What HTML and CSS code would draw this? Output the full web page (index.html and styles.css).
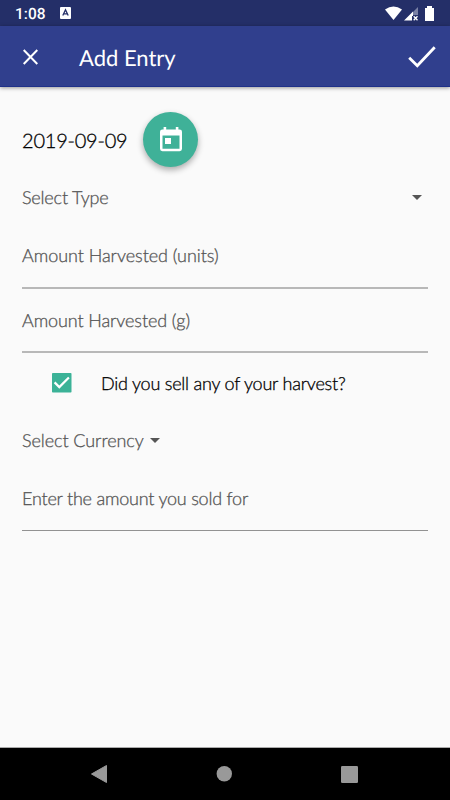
FILE: index.html
```html
<!DOCTYPE html>
<html lang="en">
<head>
<meta charset="utf-8">
<title>Add Entry</title>
<link rel="stylesheet" href="styles.css">
</head>
<body>
<div class="screen">
  <div class="status">
    <span class="clock">1:08</span>
    <svg class="app-badge" width="11" height="12" viewBox="0 0 11 12"><rect width="11" height="12" rx="1" fill="#fff"/><path d="M2.8 8.5 5.5 2.8 8.2 8.5M3.8 6.8h3.4" fill="none" stroke="#242f68" stroke-width="1.3"/></svg>
    <svg class="signals" width="50" height="16" viewBox="0 0 50 16"><path d="M0 3.6Q8.500-2.800 17 3.600L8.500 14Z" fill="#fff"/><path d="M33 1v8h-6V7Z" fill="#7a81a5"/><path d="M19 14.500 28 5.500V10h-1v4.500Z" fill="#fff"/><path d="m28.700 10.200 3.800 4m0-4-3.800 4" stroke="#fff" stroke-width="1.300"/><path d="M40 2h2V0h5v2h2v13h-9Z" fill="#fff"/></svg>
  </div>
  <header class="appbar">
    <svg class="close" width="15" height="16" viewBox="0 0 15 16"><path d="m.7 1 13.600 14M14.300 1 .7 15" stroke="#fff" stroke-width="2"/></svg>
    <h1>Add Entry</h1>
    <svg class="done" width="28" height="22" viewBox="0 0 28 22"><path d="m1.200 11.700 8.100 8L26.700 1.200" fill="none" stroke="#fff" stroke-width="2.800"/></svg>
  </header>
  <main class="form">
    <div class="date-row">
      <span class="date">2019-09-09</span>
      <button class="fab" aria-label="Choose date"><svg width="22" height="25" viewBox="0 0 22 25"><path fill="#fff" fill-rule="evenodd" d="M3.600 0h2.600v2.400h9.600V0h2.600v2.400h1.200A2.400 2.400 0 0 1 22 4.800v17A2.400 2.400 0 0 1 19.600 24.200H2.400A2.400 2.400 0 0 1 0 21.800v-17A2.400 2.400 0 0 1 2.400 2.400h1.200ZM2.500 8.500v13.200h17V8.500ZM5 11h6v6H5Z"/></svg></button>
    </div>
    <div class="select wide"><span>Select Type</span><i class="caret"></i></div>
    <div class="field units">Amount Harvested (units)</div>
    <div class="field grams">Amount Harvested (g)</div>
    <div class="check-row">
      <svg width="20" height="20" viewBox="0 0 20 20"><rect width="19.500" height="19.500" rx=".8" fill="#3bb297"/><path d="m2.600 9.400 4.700 4.700 9.600-9.700" fill="none" stroke="#fff" stroke-width="2.200"/></svg>
      <span>Did you sell any of your harvest?</span>
    </div>
    <div class="select currency"><span>Select Currency</span><i class="caret"></i></div>
    <div class="field last">Enter the amount you sold for</div>
  </main>
  <nav class="navbar">
    <svg width="16" height="18" viewBox="0 0 16 18"><path d="M15.500 .5v17L.5 9Z" fill="#999" stroke="#999" stroke-linejoin="round"/></svg>
    <svg width="16" height="16" viewBox="0 0 16 16"><circle cx="8.300" cy="7.700" r="7.700" fill="#999"/></svg>
    <svg width="17" height="17" viewBox="0 0 17 17"><rect width="17" height="17" rx="1.300" fill="#999"/></svg>
  </nav>
</div>
</body>
</html>
```

FILE: styles.css
```css
* { box-sizing: border-box; }
body { margin: 0; font-family: Lato, sans-serif; text-rendering: geometricPrecision; }
svg { display: block; flex: none; }
.screen { width: 450px; height: 800px; display: flex; flex-direction: column; background: #fafafa; overflow: hidden; }
.status { height: 26px; flex: none; display: flex; align-items: center; padding: 0 15px; background: #242f68; color: #fff; }
.clock { width: 45px; font: 500 15.500px/26px Roboto, sans-serif; padding-top: 2px; }
.signals { margin: 1px 0 0 auto; }
.appbar { height: 61px; flex: none; display: flex; align-items: center; padding: 0 14px 0 23px; background: #303f8d; border-bottom: 1px solid #1f3189; color: #fff; box-shadow: 0 1px 4px rgba(0,0,0,.4); }
.close { margin-top: 1px; }
.appbar h1 { margin: 3px 0 0 41px; font-size: 22px; line-height: 28px; font-weight: 400; }
.done { margin: 1px 0 0 auto; }
.form { flex: 1; padding: 25.500px 22px 0; border-bottom: 1px solid #aaa; color: #555; font-size: 18px; font-weight: 300; -webkit-text-stroke: .3px currentColor; }
.date-row { height: 54.500px; display: flex; align-items: center; color: #000; }
.date { width: 121px; font-size: 20px; letter-spacing: -.22px; padding-top: 2px; }
.fab { width: 55px; height: 55px; padding: 0; border: 0; border-radius: 50%; display: grid; place-items: center; background: #3fb198; box-shadow: 0 3px 6px rgba(0,0,0,.32); }
.select { display: flex; align-items: center; }
.wide { height: 61px; justify-content: space-between; padding-right: 6px; letter-spacing: -.18px; }
.wide span { margin-top: -1px; }
.caret { border: 5px solid transparent; border-top: 5px solid #555; border-bottom: 0; }
.field { height: 64px; padding-top: 20px; line-height: 24px; border-bottom: 2px solid #b8b8b8; }
.units { height: 61px; padding-top: 15px; letter-spacing: -.04px; }
.grams { padding-top: 19px; letter-spacing: -.1px; }
.check-row { height: 60px; display: flex; align-items: center; gap: 29px; padding-left: 30px; color: #000; letter-spacing: -.22px; }
.currency { height: 54px; gap: 6px; letter-spacing: -.07px; }
.last { padding-top: 19px; letter-spacing: -.22px; border-bottom: 1px solid #929292; }
.navbar { height: 52px; flex: none; display: flex; align-items: center; justify-content: space-between; padding: 0 92px 0 91px; background: #000; }
```
